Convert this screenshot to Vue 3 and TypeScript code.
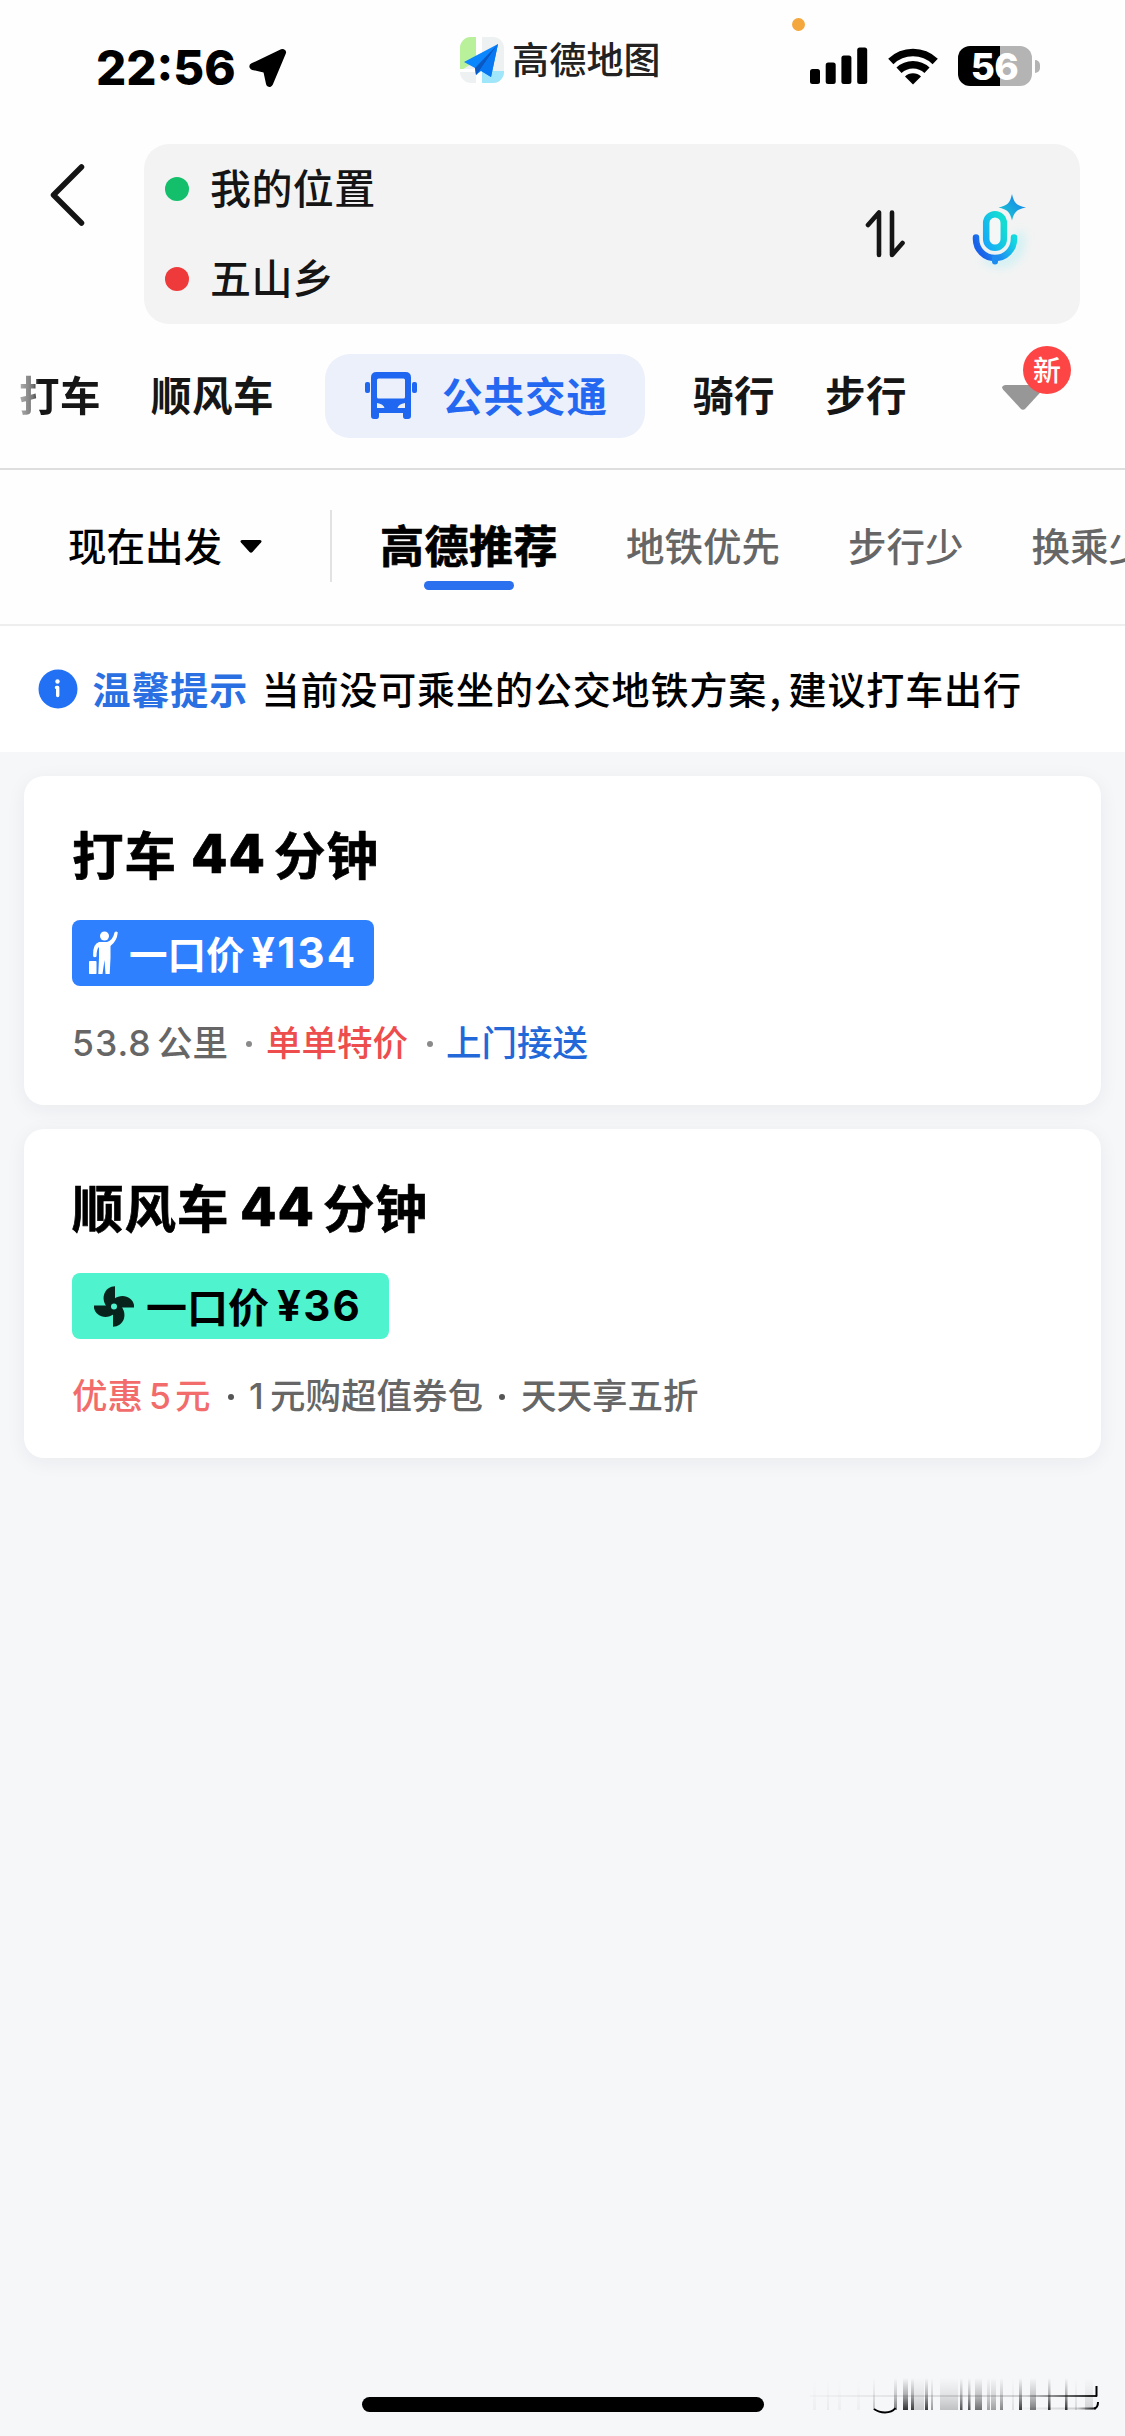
<script setup lang="ts">
interface Stripe {
  x: number
  w: number
  o: number
}

const filters = ['地铁优先', '步行少', '换乘少']

const stripes: Stripe[] = [
  { x: 33, w: 3, o: 0.04 },
  { x: 47, w: 2, o: 0.06 },
  { x: 58, w: 3, o: 0.04 },
  { x: 77, w: 3, o: 0.04 },
  { x: 93, w: 2, o: 0.25 },
  { x: 114, w: 3, o: 0.6 },
  { x: 123, w: 5, o: 0.95 },
  { x: 131, w: 3, o: 0.9 },
  { x: 134, w: 10, o: 0.22 },
  { x: 145, w: 3, o: 0.9 },
  { x: 151, w: 2, o: 0.45 },
  { x: 160, w: 18, o: 0.26 },
  { x: 180, w: 2.5, o: 0.8 },
  { x: 188, w: 2.5, o: 0.8 },
  { x: 195, w: 7, o: 0.65 },
  { x: 207, w: 3, o: 0.4 },
  { x: 211, w: 5, o: 0.42 },
  { x: 220, w: 3, o: 0.55 },
  { x: 232, w: 2, o: 0.12 },
  { x: 239, w: 3, o: 0.9 },
  { x: 250, w: 6, o: 0.6 },
  { x: 268, w: 2.5, o: 0.95 },
  { x: 285, w: 2.5, o: 0.95 },
  { x: 295, w: 2, o: 0.15 },
  { x: 305, w: 8, o: 0.18 },
]
</script>

<template>
  <div class="screen">
    <header class="status">
      <span class="time">22:56</span>
      <svg class="loc" width="40" height="40" viewBox="0 0 40 40">
        <path d="M34.5 4.5 L5 18.500 L18.500 21.500 L21.500 35.500 Z" fill="#000" stroke="#000" stroke-width="7" stroke-linejoin="round" />
      </svg>
      <div class="brand">
        <svg width="44" height="46" viewBox="0 0 44 46">
          <defs><clipPath id="logoClip"><rect width="44" height="46" rx="11" /></clipPath></defs>
          <g clip-path="url(#logoClip)">
            <rect width="44" height="46" fill="#eef1f2" />
            <path d="M0 0H16V24L0 34Z" fill="#b9f09a" />
            <path d="M22 34H44V46H22Z" fill="#9fe6fb" />
            <path d="M16 0H22V46H16Z" fill="#fff" />
            <path d="M0 32L22 32V35H0Z" fill="#fff" />
          </g>
          <path d="M38 7 L4 25 L15 31 L16 38 L21 34 L31 40 Z" fill="#0a86ff" />
          <path d="M38 7 L15 31 L16 38 L20 33 Z" fill="#0a58c4" />
          <path d="M38 7 L20 33 L31 40 Z" fill="#0878f2" />
        </svg>
        <span>高德地图</span>
      </div>
      <i class="mic-dot"></i>
      <svg class="signal" width="58" height="37" viewBox="0 0 58 37">
        <rect x="0" y="22" width="10" height="15" rx="2.500" />
        <rect x="15.700" y="15.500" width="10" height="21.500" rx="2.500" />
        <rect x="31.400" y="8.500" width="10" height="28.500" rx="2.500" />
        <rect x="47.200" y="0.500" width="10" height="36.500" rx="2.500" />
      </svg>
      <svg class="wifi" width="52" height="38" viewBox="0 0 52 38">
        <g fill="none" stroke="#000" stroke-width="7.500">
          <path d="M3.800 14.500 A32 32 0 0 1 48.200 14.500" />
          <path d="M12 23.200 A20.500 20.500 0 0 1 40 23.200" />
        </g>
        <path d="M18 29.500 A11.500 11.500 0 0 1 34 29.500 L26 37.500Z" />
      </svg>
      <div class="battery"><span>56</span></div>
      <i class="battery-cap"></i>
    </header>

    <section class="search-row">
      <svg class="back" width="36" height="64" viewBox="0 0 36 64">
        <path d="M32.500 4 L4.500 32 L32.500 60" fill="none" stroke="#151515" stroke-width="5.500" stroke-linecap="round" stroke-linejoin="round" />
      </svg>
      <div class="search-box">
        <div class="places">
          <div class="place"><i class="dot green"></i><span>我的位置</span></div>
          <div class="place"><i class="dot red"></i><span>五山乡</span></div>
        </div>
        <svg class="swap" width="40" height="50" viewBox="0 0 40 50">
          <path d="M3 16 L14 3.500 V46 M27 3.500 V46 L37.500 34" fill="none" stroke="#151515" stroke-width="4.600" stroke-linecap="round" stroke-linejoin="round" />
        </svg>
        <svg class="mic" width="90" height="100" viewBox="0 -2 90 100">
          <defs>
            <linearGradient id="micArc" x1="0" y1="0.3" x2="1" y2="0"><stop offset="0" stop-color="#1a62ea" /><stop offset="0.5" stop-color="#1c9cf0" /><stop offset="1" stop-color="#12dbe0" /></linearGradient>
            <linearGradient id="micBody" x1="0" y1="1" x2="0.9" y2="0.2"><stop offset="0" stop-color="#16a8fb" /><stop offset="1" stop-color="#14dcd2" /></linearGradient>
            <linearGradient id="micStar" x1="0" y1="1" x2="1" y2="0"><stop offset="0" stop-color="#18d2cc" /><stop offset="1" stop-color="#1877f2" /></linearGradient>
            <filter id="micGlow" x="-50%" y="-50%" width="200%" height="200%"><feGaussianBlur stdDeviation="5" /></filter>
          </defs>
          <path d="M26 62 A20 20 0 0 0 61 50 L61 38" fill="none" stroke="#8cecf5" stroke-opacity="0.4" stroke-width="8" filter="url(#micGlow)" />
          <path d="M17 43.500 V45 A19 19 0 0 0 55 45 V43.500" fill="none" stroke="url(#micArc)" stroke-width="6.500" stroke-linecap="round" />
          <path d="M36 64 V67.500" stroke="#1c8cf0" stroke-width="6" stroke-linecap="round" />
          <rect x="27.200" y="20.200" width="17.600" height="33.600" rx="8.800" fill="#f5f7f7" stroke="url(#micBody)" stroke-width="6.500" />
          <path d="M53 0 C55 9 57.500 11.500 67 13.500 C57.500 15.500 55 18 53 26.500 C51 18 48.500 15.500 39.500 13.500 C48.500 11.500 51 9 53 0Z" fill="url(#micStar)" stroke="#f3f3f3" stroke-width="3" paint-order="stroke" />
        </svg>
      </div>
    </section>

    <nav class="modes">
      <span class="fade">打车</span>
      <span>顺风车</span>
      <div class="active-mode">
        <svg width="52" height="48" viewBox="0 0 52 48">
          <path fill="#1f66f0" fill-rule="evenodd" d="M11.500 0H40.500Q46 0 46 5.500V44Q46 47 43 47H40.500Q38 47 38 44V41H14V44Q14 47 11.500 47H9Q6 47 6 44V5.500Q6 0 11.500 0ZM13.500 6.500Q12 6.500 12 8V25Q12 26.500 13.500 26.500H38.500Q40 26.500 40 25V8Q40 6.500 38.500 6.500ZM12 31V36H19.500Q18.500 32 12 31ZM40 31Q33.500 32 32.500 36H40Z" />
          <rect y="10" width="5" height="11" rx="2" fill="#1f66f0" />
          <rect x="47" y="10" width="5" height="11" rx="2" fill="#1f66f0" />
        </svg>
        <span>公共交通</span>
      </div>
      <span>骑行</span>
      <span>步行</span>
      <div class="more">
        <svg width="42" height="25" viewBox="0 0 42 25"><path d="M3 0H39Q43.500 1 41 4.500L23.500 23.500Q21 26 18.500 23.500L1 4.500Q-1.500 1 3 0Z" fill="#979797" /></svg>
        <b class="badge">新</b>
      </div>
    </nav>

    <section class="filters">
      <div class="depart">
        <span>现在出发</span>
        <svg width="22" height="13" viewBox="0 0 22 13"><path d="M2 0H20Q22.500 0.500 21 2.500L12.500 12Q11 13.500 9.500 12L1 2.500Q-0.500 0.500 2 0Z" /></svg>
      </div>
      <div class="selected"><span>高德推荐</span><i></i></div>
      <span v-for="f in filters" :key="f" class="filter">{{ f }}</span>
    </section>

    <section class="notice">
      <svg width="40" height="40" viewBox="0 0 40 40">
        <circle cx="20" cy="20" r="19.500" fill="#2270f3" />
        <circle cx="19.500" cy="12.500" r="2.200" fill="#fff" />
        <path d="M18.500 18.500H19.700V26.500" fill="none" stroke="#fff" stroke-width="3.400" stroke-linecap="round" stroke-linejoin="round" />
      </svg>
      <b>温馨提示</b>
      <span>当前没可乘坐的公交地铁方案</span>
      <span>,</span>
      <span>建议打车出行</span>
    </section>

    <main class="list">
      <article class="card">
        <h2 class="title taxi-title"><span>打车</span><span class="num">44</span><span>分钟</span></h2>
        <div class="tag taxi-tag">
          <svg width="30" height="44" viewBox="0 0 30 44" fill="#fff">
            <circle cx="15.500" cy="5" r="4.500" />
            <path d="M10 11H18Q24 9 25.500 1.500Q27 -0.500 28.800 1.500Q28 10 21.500 15V27L20.700 43H16.500L15.500 29L13.500 43H9.300L10 27V16Q7.500 18 7.500 25.500Q5.800 27 4.200 25.500Q3.500 13 10 11Z" />
            <rect x="0" y="30" width="7.500" height="13" rx="0.800" />
          </svg>
          <span>一口价</span><b>¥134</b>
        </div>
        <p class="meta taxi-meta">
          <span class="wide">53.8</span><span>公里</span><i></i><span class="red-text">单单特价</span><i></i><span class="blue-text">上门接送</span>
        </p>
      </article>

      <article class="card">
        <h2 class="title pool-title"><span>顺风车</span><span class="num">44</span><span>分钟</span></h2>
        <div class="tag pool-tag">
          <svg width="40" height="41" viewBox="-20 -20.500 40 41" fill="#07231c">
            <g v-for="a in [0, 90, 180, 270]" :key="a" :transform="`rotate(${a})`">
              <path d="M1 -20.300 C-9 -20 -14 -9 -7.500 0 L1 1 Z" />
            </g>
            <circle r="3" fill="#4ff3ce" />
          </svg>
          <span>一口价</span><b>¥36</b>
        </div>
        <p class="meta pool-meta">
          <span class="pink-text">优惠</span><span class="pink-text">5</span><span class="pink-text">元</span><i></i><span>1</span><span>元购超值券包</span><i></i><span>天天享五折</span>
        </p>
      </article>
    </main>

    <footer class="bottom">
      <div class="home-bar"></div>
      <svg class="streaks" width="345" height="60" viewBox="0 30 345 60">
        <defs>
          <linearGradient id="streak" x1="0" y1="0" x2="0" y2="1">
            <stop offset="0" stop-color="#000" stop-opacity="0" />
            <stop offset="0.5" stop-color="#000" stop-opacity="0.3" />
            <stop offset="1" stop-color="#000" stop-opacity="0.85" />
          </linearGradient>
          <linearGradient id="hline" x1="0" y1="0" x2="1" y2="0">
            <stop offset="0" stop-color="#000" stop-opacity="0.02" />
            <stop offset="0.75" stop-color="#000" stop-opacity="0.16" />
            <stop offset="1" stop-color="#000" stop-opacity="0.9" />
          </linearGradient>
        </defs>
        <rect v-for="s in stripes" :key="s.x" :x="s.x" y="38" :width="s.w" height="32" :opacity="s.o" fill="url(#streak)" />
        <rect x="30" y="55" width="287" height="2" fill="url(#hline)" />
        <rect x="240" y="67.500" width="76" height="2" fill="url(#hline)" />
        <path d="M94 69 Q99 72.500 105 72.500 Q112 72.500 115.500 68 M316.500 46 V56.500 M318 62 Q318 68 314 68.500" fill="none" stroke="#000" stroke-width="2" />
      </svg>
    </footer>
  </div>
</template>

<style>
html,
body {
  margin: 0;
  background: #f5f7f9;
}
</style>

<style scoped>
.screen {
  width: 1125px;
  height: 2436px;
  overflow: hidden;
  display: flex;
  flex-direction: column;
  background: #f5f7f9;
  color: #000;
  font-family: Inter, 'Noto Sans CJK SC', sans-serif;
  white-space: nowrap;
}
svg {
  display: block;
  flex: none;
}
span,
b,
i {
  display: block;
  font-style: normal;
}
.status {
  height: 144px;
  background: #fefefe;
  display: grid;
  grid-template-columns: 96px 152px 212px 332px 18px 77px 71px 75px 10px;
  align-items: start;
}
.time {
  grid-column: 2;
  font-size: 47.5px;
  line-height: 56px;
  font-weight: 800;
  margin-top: 40px;
}
.loc {
  margin-top: 48px;
}
.brand {
  display: flex;
  align-items: center;
  gap: 8px;
  margin-top: 37px;
  font: 500 37px/46px 'Noto Sans CJK SC', sans-serif;
  letter-spacing: 0.2px;
  color: #222;
}
.brand span {
  margin-top: -4px;
}
.mic-dot {
  width: 13px;
  height: 13px;
  margin-top: 17.5px;
  border-radius: 50%;
  background: #f3a73c;
}
.signal {
  margin-top: 47px;
}
.wifi {
  margin-top: 47px;
}
.battery {
  width: 74px;
  height: 40px;
  margin-top: 46px;
  border-radius: 12px;
  background: linear-gradient(90deg, #000 42px, #b4b4b4 42px);
}
.battery span {
  color: #fff;
  font-size: 37px;
  line-height: 41px;
  font-weight: 800;
  text-align: center;
  letter-spacing: -0.5px;
  margin-left: -1px;
}
.battery-cap {
  width: 5px;
  height: 13px;
  margin: 60px 0 0 2px;
  border-radius: 0 5px 5px 0;
  background: #b4b4b4;
}
.search-row {
  height: 180px;
  background: #fefefe;
  display: flex;
}
.back {
  margin: 19px 59px 0 49px;
}
.search-box {
  width: 936px;
  height: 180px;
  border-radius: 25px;
  background: #f3f3f3;
  display: flex;
}
.places {
  width: 721px;
}
.place {
  height: 90px;
  display: flex;
  align-items: center;
  padding-left: 21px;
  gap: 20px;
  font: 500 41px/60px 'Noto Sans CJK SC', sans-serif;
  letter-spacing: 0.4px;
  color: #151515;
}
.place span {
  margin: -6px 0 0 1px;
}
.dot {
  width: 24px;
  height: 24px;
  border-radius: 50%;
}
.green {
  background: #13bf6a;
}
.red {
  background: #ee3a3a;
}
.swap {
  margin-top: 65px;
}
.mic {
  margin: 48px 0 0 54px;
}
.modes {
  height: 144px;
  background: #fefefe;
  display: grid;
  grid-template-columns: 131px 174px 368px 132px 177px 60px;
  padding-left: 20px;
  align-items: center;
  font: 700 40.5px/60px 'Noto Sans CJK SC', sans-serif;
  letter-spacing: 0.5px;
  color: #161616;
}
.modes > span {
  margin-top: -4px;
}
.modes > .fade {
  margin-left: -1px;
  color: transparent;
  background: linear-gradient(90deg, #b0b0b0 0, #777 14px, #161616 20px);
  background-clip: text;
  -webkit-background-clip: text;
}
.active-mode {
  box-sizing: border-box;
  width: 320px;
  height: 84px;
  padding-left: 40px;
  border-radius: 25px;
  background: #ebf0fb;
  display: flex;
  align-items: center;
  gap: 25px;
  letter-spacing: 1px;
  color: #2468f2;
}
.active-mode span {
  margin-top: -3px;
}
.more {
  position: relative;
  margin-top: 2px;
}
.badge {
  position: absolute;
  left: 21px;
  top: -39px;
  width: 48px;
  height: 48px;
  border-radius: 50%;
  background: #fd4545;
  color: #fff;
  font: 500 28px/46px 'Noto Sans CJK SC', sans-serif;
  letter-spacing: 0;
  text-align: center;
}
.filters {
  height: 154px;
  border-top: 2px solid #dedede;
  border-bottom: 2px solid #eee;
  background: #fefefe;
  display: flex;
  align-items: center;
  font: 400 38.5px/56px 'Noto Sans CJK SC', sans-serif;
  color: #666;
}
.depart {
  box-sizing: border-box;
  flex: none;
  width: 332px;
  height: 72px;
  margin-top: -2px;
  padding-left: 68px;
  border-right: 2px solid #e2e2e2;
  display: flex;
  align-items: center;
  gap: 18px;
  font-weight: 500;
  color: #000;
}
.depart span {
  margin-top: -4px;
}
.selected {
  flex: none;
  width: 178px;
  margin: 8px 68px 0 48px;
  color: #000;
}
.selected span {
  font: 700 44px/64px 'Noto Sans CJK SC', sans-serif;
  letter-spacing: 0.5px;
  -webkit-text-stroke: 0.7px #000;
}
.selected i {
  width: 90px;
  height: 9px;
  margin: 5px auto 0;
  border-radius: 5px;
  background: #2b70ee;
}
.filter {
  font-weight: 500;
  margin: -6px 68px 0 0;
  flex: none;
}
.notice {
  height: 126px;
  background: #fff;
  display: grid;
  grid-template-columns: 54.5px 169px 508px 19px 240px;
  padding-left: 38px;
  align-items: center;
  font: 500 38px/56px 'Noto Sans CJK SC', sans-serif;
  letter-spacing: 0.9px;
}
.notice b,
.notice span {
  margin-top: -3px;
}
.notice b {
  font-weight: 700;
  color: #2b70e2;
}
.list {
  padding: 24px 24px 0;
  display: flex;
  flex-direction: column;
  gap: 24px;
}
.card {
  box-sizing: border-box;
  height: 329px;
  padding: 42px 48px 0;
  border-radius: 20px;
  background: #fff;
  box-shadow: 0 4px 20px rgba(30, 35, 50, 0.06);
}
.title {
  margin: 0;
  height: 70px;
  display: grid;
  font: 700 51.5px/70px 'Noto Sans CJK SC', sans-serif;
  letter-spacing: 1px;
  -webkit-text-stroke: 0.7px #000;
}
.title .num {
  font: 800 53px/72px Inter, sans-serif;
  letter-spacing: 1px;
}
.taxi-title {
  grid-template-columns: 119px 83px 120px;
}
.pool-title {
  grid-template-columns: 168px 83px 120px;
}
.tag {
  box-sizing: border-box;
  height: 66px;
  margin-top: 32px;
  border-radius: 8px;
  display: grid;
  align-items: center;
  font: 700 40px/60px 'Noto Sans CJK SC', sans-serif;
}
.tag b {
  font: 700 42px/60px Inter, sans-serif;
  letter-spacing: 2.2px;
}
.tag span {
  margin-top: -3px;
}
.taxi-tag {
  width: 302px;
  padding-left: 17px;
  grid-template-columns: 40px 122px 110px;
  background: #2e80ff;
  color: #fff;
  font-size: 38.5px;
}
.pool-tag {
  width: 317px;
  padding-left: 22px;
  grid-template-columns: 52px 131px 100px;
  background: #4ff3ce;
  font-size: 41px;
}
.meta {
  margin: 31px 0 0;
  display: grid;
  align-items: center;
  font: 500 35.5px/54px Inter, 'Noto Sans CJK SC', sans-serif;
  color: #666;
}
.meta i {
  width: 6px;
  height: 6px;
  border-radius: 50%;
  background: #8a8a8a;
}
.wide {
  letter-spacing: 1px;
}
.taxi-meta {
  grid-template-columns: 85px 89px 20px 161px 19px 150px;
}
.pool-meta {
  grid-template-columns: 77px 26px 53px 21px 21px 229px 22px 200px;
}
.pool-meta i {
  background: #555;
}
.red-text {
  color: #ee4d4d;
}
.blue-text {
  color: #2368d8;
}
.pink-text {
  color: #f26c6c;
}
.bottom {
  margin-top: auto;
  display: flex;
  align-items: flex-end;
  height: 66px;
}
.home-bar {
  width: 402px;
  height: 15px;
  margin: 0 16px 24px 362px;
  border-radius: 8px;
  background: #000;
}
.streaks {
  margin-bottom: 6px;
}
</style>
